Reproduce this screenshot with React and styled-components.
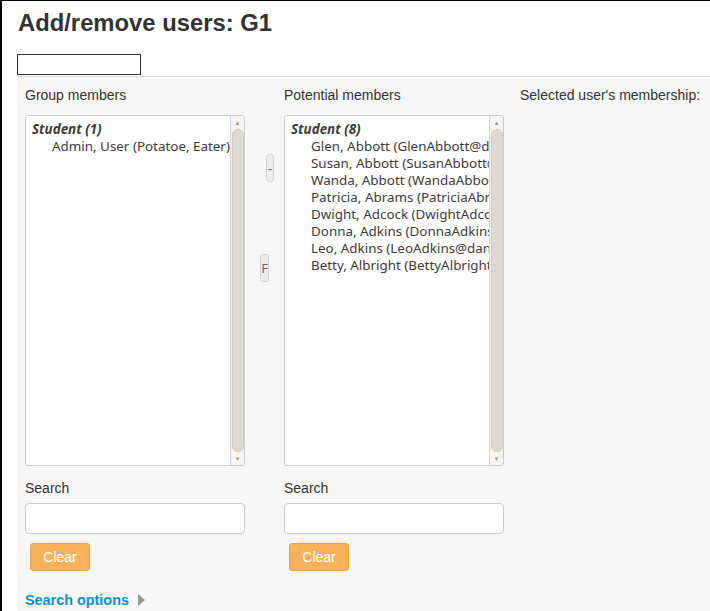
import styled, {createGlobalStyle} from "styled-components";

const GlobalStyle = createGlobalStyle`
    html, body {
        margin: 0;
        padding: 0;
        background: #fff;
    }
    body {
        font-family: "Liberation Sans", Arial, sans-serif;
        color: #333;
    }
`;

const Page = styled.div`
    width: 710px;
    height: 611px;
    box-sizing: border-box;
    border-top: 1px solid #000;
    border-left: 2px solid #000;
    padding-left: 15px;
    overflow: hidden;
    display: flex;
    flex-direction: column;
`;

const Title = styled.h2`
    margin: 8px 0 0 1px;
    font-size: 23.8px;
    line-height: 28px;
    font-weight: bold;
    color: #333;
`;

const TopBox = styled.div`
    margin-top: 17px;
    width: 122px;
    height: 19px;
    border: 1px solid #333;
    background: #fff;
`;

const Panel = styled.div`
    flex: 1;
    margin-top: 1px;
    border-top: 1px solid #ddd;
    background: #f7f7f7;
    padding: 8px 0 0 8px;
`;

const Columns = styled.div`
    display: flex;
    align-items: flex-start;
`;

const Column = styled.div`
    width: ${p => p.$wide ? "auto" : "220px"};
    flex: none;
    display: flex;
    flex-direction: column;
`;

const Label = styled.div`
    font-size: 14px;
    line-height: 20px;
    color: #333;
    white-space: nowrap;
    margin-left: ${p => p.$indent || 0}px;
`;

const ListBox = styled.div`
    margin-top: 10px;
    height: 351px;
    box-sizing: border-box;
    border: 1px solid #ccc;
    border-radius: 3px;
    background: #fff;
    display: flex;
    overflow: hidden;
`;

const ListContent = styled.div`
    flex: 1;
    overflow: hidden;
    padding: 5px 0 0 6px;
    font-family: "Noto Sans", "DejaVu Sans", sans-serif;
    font-size: 13.4px;
    line-height: 17px;
    color: #3c3c3c;
    white-space: nowrap;
`;

const GroupLabel = styled.div`
    font-weight: bold;
    font-style: italic;
`;

const Option = styled.div`
    padding-left: 20px;
`;

const Scrollbar = styled.div`
    width: 13px;
    flex: none;
    background: #f2f1f0;
    border-left: 1px solid #d8d5d2;
    display: flex;
    flex-direction: column;
    align-items: center;
`;

const Arrow = styled.div`
    width: 13px;
    height: 13px;
    display: flex;
    align-items: center;
    justify-content: center;
    font-size: 6px;
    color: #9a9794;
    background: #f7f6f5;
    border-radius: ${p => p.$down ? "0 0 6px 6px" : "6px 6px 0 0"};
`;

const Thumb = styled.div`
    flex: 1;
    width: 12px;
    box-sizing: border-box;
    background: #dcdad7;
    border: 1px solid #cfccc9;
    border-radius: 6px;
`;

const Middle = styled.div`
    width: 39px;
    flex: none;
    position: relative;
    align-self: stretch;
`;

const MoveButton = styled.div`
    position: absolute;
    top: ${p => p.$top}px;
    left: ${p => p.$left}px;
    width: ${p => p.$width}px;
    height: 28px;
    box-sizing: border-box;
    border: 1px solid #d3d3d3;
    border-radius: 3px;
    background: #ededed;
    font-family: "Noto Sans", sans-serif;
    font-size: 13px;
    color: #666;
    display: flex;
    align-items: center;
    justify-content: center;
    overflow: hidden;
`;

const SearchLabel = styled(Label)`
    margin-top: 12px;
`;

const SearchInput = styled.div`
    margin-top: 5px;
    height: 31px;
    box-sizing: border-box;
    border: 1px solid #ccc;
    border-radius: 4px;
    background: #fff;
`;

const ClearButton = styled.button`
    margin: 9px 0 0 5px;
    align-self: flex-start;
    width: 60px;
    height: 28px;
    border: 1px solid #eea441;
    border-radius: 3px;
    background: #f7b25a;
    color: #fff;
    font-family: "Liberation Sans", Arial, sans-serif;
    font-size: 14px;
    padding: 0;
`;

const SearchOptions = styled.div`
    margin-top: 21px;
    display: flex;
    align-items: center;
    gap: 9px;
    font-size: 14.4px;
    font-weight: bold;
    color: #0f8fd8;
`;

const Caret = styled.span`
    width: 0;
    height: 0;
    border-top: 6px solid transparent;
    border-bottom: 6px solid transparent;
    border-left: 7px solid #999;
`;

function SelectList({label, items}) {
    return (
        <ListBox>
            <ListContent>
                <GroupLabel>{label}</GroupLabel>
                {items.map(item => <Option key={item}>{item}</Option>)}
            </ListContent>
            <Scrollbar>
                <Arrow>▲</Arrow>
                <Thumb/>
                <Arrow $down>▼</Arrow>
            </Scrollbar>
        </ListBox>
    );
}

function SearchBlock() {
    return (
        <>
            <SearchLabel>Search</SearchLabel>
            <SearchInput/>
            <ClearButton>Clear</ClearButton>
        </>
    );
}

const potential = [
    "Glen, Abbott (GlenAbbott@dandelion.com)",
    "Susan, Abbott (SusanAbbott@dandelion.com)",
    "Wanda, Abbott (WandaAbbott@dandelion.com)",
    "Patricia, Abrams (PatriciaAbrams@dandelion.com)",
    "Dwight, Adcock (DwightAdcock@dandelion.com)",
    "Donna, Adkins (DonnaAdkins@dandelion.com)",
    "Leo, Adkins (LeoAdkins@dandelion.com)",
    "Betty, Albright (BettyAlbright@dandelion.com)",
];

export default function App() {
    return (
        <>
            <GlobalStyle/>
            <Page>
                <Title>Add/remove users: G1</Title>
                <TopBox/>
                <Panel>
                    <Columns>
                        <Column>
                            <Label>Group members</Label>
                            <SelectList label="Student (1)" items={["Admin, User (Potatoe, Eater)"]}/>
                            <SearchBlock/>
                        </Column>
                        <Middle>
                            <MoveButton $top={69} $left={21} $width={8}>-</MoveButton>
                            <MoveButton $top={169} $left={15} $width={9}>F</MoveButton>
                        </Middle>
                        <Column>
                            <Label>Potential members</Label>
                            <SelectList label="Student (8)" items={potential}/>
                            <SearchBlock/>
                        </Column>
                        <Column $wide>
                            <Label $indent={16}>Selected user's membership:</Label>
                        </Column>
                    </Columns>
                    <SearchOptions>Search options <Caret/></SearchOptions>
                </Panel>
            </Page>
        </>
    );
}
